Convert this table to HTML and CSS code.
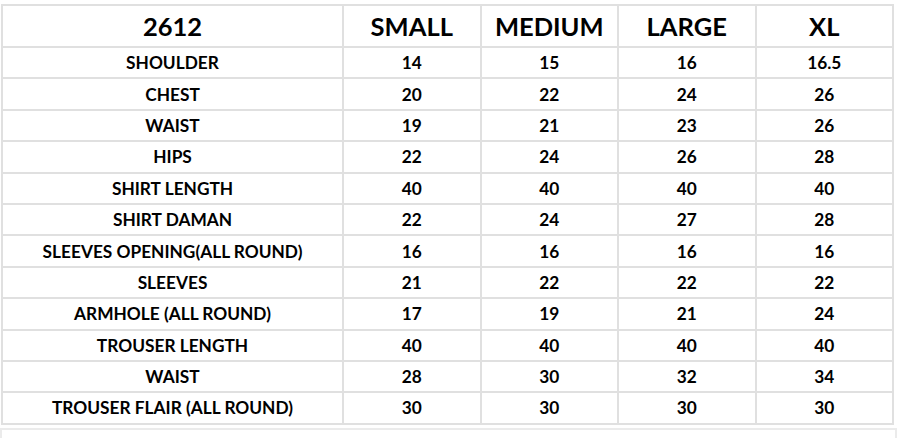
FILE: index.html
```html
<!DOCTYPE html>
<html>
<head>
<meta charset="utf-8">
<link rel="stylesheet" href="styles.css">
</head>
<body>
<div class="page">
  <table class="sizes">
    <colgroup>
      <col class="c-label"><col class="c-size"><col class="c-size"><col class="c-size"><col class="c-size">
    </colgroup>
    <thead>
      <tr><th>2612</th><th>SMALL</th><th>MEDIUM</th><th>LARGE</th><th>XL</th></tr>
    </thead>
    <tbody>
      <tr><td>SHOULDER</td><td>14</td><td>15</td><td>16</td><td>16.5</td></tr>
      <tr><td>CHEST</td><td>20</td><td>22</td><td>24</td><td>26</td></tr>
      <tr><td>WAIST</td><td>19</td><td>21</td><td>23</td><td>26</td></tr>
      <tr><td>HIPS</td><td>22</td><td>24</td><td>26</td><td>28</td></tr>
      <tr><td>SHIRT LENGTH</td><td>40</td><td>40</td><td>40</td><td>40</td></tr>
      <tr><td>SHIRT DAMAN</td><td>22</td><td>24</td><td>27</td><td>28</td></tr>
      <tr><td>SLEEVES OPENING(ALL ROUND)</td><td>16</td><td>16</td><td>16</td><td>16</td></tr>
      <tr><td>SLEEVES</td><td>21</td><td>22</td><td>22</td><td>22</td></tr>
      <tr><td>ARMHOLE (ALL ROUND)</td><td>17</td><td>19</td><td>21</td><td>24</td></tr>
      <tr><td>TROUSER LENGTH</td><td>40</td><td>40</td><td>40</td><td>40</td></tr>
      <tr><td>WAIST</td><td>28</td><td>30</td><td>32</td><td>34</td></tr>
      <tr><td>TROUSER FLAIR (ALL ROUND)</td><td>30</td><td>30</td><td>30</td><td>30</td></tr>
    </tbody>
  </table>
  <div class="next-box"></div>
</div>
</body>
</html>
```

FILE: styles.css
```css
html, body {
  margin: 0;
  padding: 0;
  background: #ffffff;
}

.page {
  height: 438px;
  overflow: hidden;
  box-sizing: border-box;
  padding: 4px 0 0 0;
  font-family: Lato, "Open Sans", "Liberation Sans", sans-serif;
  font-weight: 700;
  color: #000000;
}

.sizes {
  border-collapse: collapse;
  table-layout: fixed;
  width: 891px;
  margin-left: 1px;
}

.c-label { width: 341px; }
.c-size { width: 137.5px; }

.sizes th,
.sizes td {
  border: 2px solid #e0e0e0;
  text-align: center;
  vertical-align: middle;
  padding: 0;
  white-space: nowrap;
}

.sizes th {
  height: 40px;
  font-size: 25.5px;
  font-weight: 700;
}

.sizes td {
  height: 29.4px;
  font-size: 17.3px;
}

.next-box {
  margin-top: 3px;
  width: 893px;
  height: 30px;
  border: 2px solid #ebebeb;
}
```
